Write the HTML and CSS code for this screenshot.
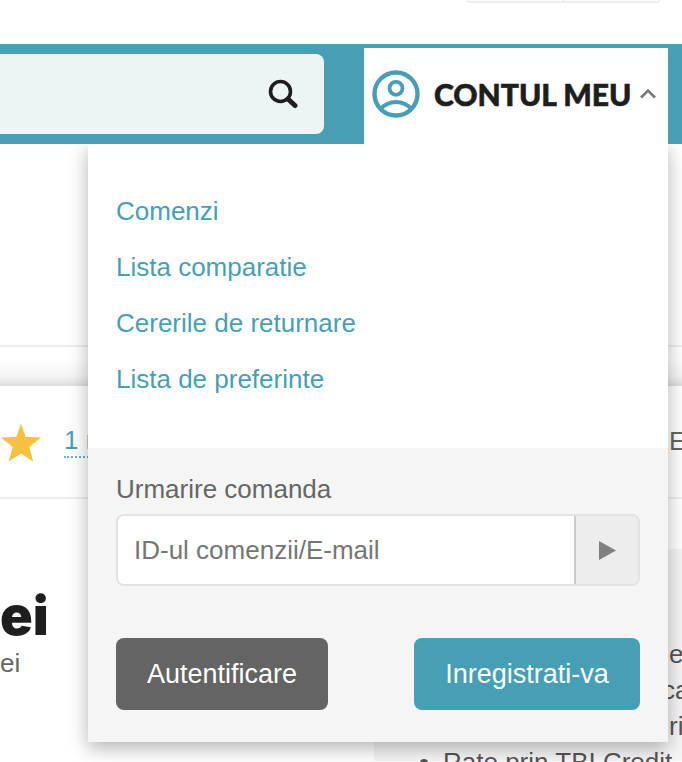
FILE: index.html
```html
<!DOCTYPE html>
<html lang="en">
<head>
    <meta charset="UTF-8">
    <meta name="viewport" content="width=device-width, initial-scale=1.0">
    <title>Contul meu</title>
    <link rel="stylesheet" href="styles.css">
</head>
<body>
    <div class="top-bar">
        <div class="top-tabs">
            <div class="top-tab"></div>
            <div class="top-tab"></div>
        </div>
    </div>

    <div class="header">
        <div class="search-box">
            <svg class="search-icon" viewBox="0 0 30 30" width="30" height="30">
                <circle cx="12.5" cy="12.5" r="10" fill="none" stroke="#1e1e1e" stroke-width="3.6"></circle>
                <path d="M20 20L27 26.5" fill="none" stroke="#1e1e1e" stroke-width="5" stroke-linecap="round"></path>
            </svg>
        </div>
        <div class="account-tab">
            <svg class="account-icon" viewBox="0 0 48 48" width="48" height="48">
                <circle cx="24" cy="24" r="21.5" fill="none" stroke="#479fb5" stroke-width="4.4"></circle>
                <circle cx="24" cy="18.3" r="6.5" fill="none" stroke="#479fb5" stroke-width="3.8"></circle>
                <path d="M8 39.5C13 34 18 32 24 32C30 32 35 34 40 39.5" fill="none" stroke="#479fb5" stroke-width="4"></path>
            </svg>
            <span class="account-label">CONTUL MEU</span>
            <svg class="account-caret" viewBox="0 0 18 12" width="18" height="12">
                <path d="M2 10.5L9 3.5L16 10.5" fill="none" stroke="#777" stroke-width="2.6"></path>
            </svg>
        </div>
    </div>

    <div class="sub-nav"></div>
    <div class="band"></div>

    <div class="rating-row">
        <svg class="star" viewBox="0 0 42 40" width="42" height="40">
            <path d="M21 1.8L25.6 14.8L41 15.6L29.4 25L33.2 39.6L21 31.4L8.8 39.6L12.6 25L1 15.6L16.4 14.8Z" fill="#f6c142"></path>
        </svg>
        <a class="rating-link" href="#">1 review</a>
        <span class="rating-side">E</span>
    </div>

    <div class="content">
        <div class="title-col">
            <h1 class="title">ei</h1>
            <p class="subtitle">ei</p>
        </div>
        <div class="side-panel">
            <div class="side-line">e</div>
            <div class="side-line side-line-wide">ca</div>
            <div class="side-line">ri</div>
            <ul class="side-list">
                <li>Rate prin TBI Credit</li>
            </ul>
        </div>
    </div>

    <div class="dropdown">
        <div class="dropdown-links">
            <a href="#">Comenzi</a>
            <a href="#">Lista comparatie</a>
            <a href="#">Cererile de returnare</a>
            <a href="#">Lista de preferinte</a>
        </div>
        <div class="dropdown-bottom">
            <label class="track-label">Urmarire comanda</label>
            <div class="track-field">
                <div class="track-input">ID-ul comenzii/E-mail</div>
                <div class="track-btn">
                    <svg viewBox="0 0 17 19" width="17" height="19">
                        <path d="M0 0L17 9.5L0 19Z" fill="#808080"></path>
                    </svg>
                </div>
            </div>
            <div class="dropdown-actions">
                <a class="btn btn-dark" href="#">Autentificare</a>
                <a class="btn btn-blue" href="#">Inregistrati-va</a>
            </div>
        </div>
    </div>
</body>
</html>
```

FILE: styles.css
```css
html, body {
    height: 762px;
}

body {
    margin: 0;
    position: relative;
    overflow: hidden;
    background-color: #fff;
    color: #666;
    font-family: "Liberation Sans", Arial, sans-serif;
}

a {
    text-decoration: none;
}

.top-bar {
    height: 44px;
    display: flex;
    justify-content: flex-end;
    padding-right: 22px;
}

.top-tabs {
    display: flex;
    width: 194px;
    height: 3px;
    box-sizing: border-box;
    border: 2px solid #eee;
    border-top: 0;
    border-radius: 0 0 6px 6px;
}

.top-tab {
    flex: 1;
}

.top-tab:first-child {
    border-right: 2px solid #eee;
}

.header {
    height: 100px;
    display: flex;
    background-color: #479fb5;
}

.search-box {
    width: 324px;
    height: 80px;
    margin-top: 10px;
    box-sizing: border-box;
    display: flex;
    align-items: center;
    justify-content: flex-end;
    padding-right: 26px;
    background-color: #ecf4f6;
    border-radius: 0 8px 8px 0;
}

.account-tab {
    width: 304px;
    height: 96px;
    margin-top: 4px;
    margin-left: 40px;
    box-sizing: border-box;
    display: flex;
    align-items: center;
    padding: 0 0 4px 8px;
    background-color: #fff;
}

.account-label {
    margin-left: 14px;
    color: #1e1e1e;
    font-family: Lato, sans-serif;
    font-size: 30px;
    font-weight: 900;
    white-space: nowrap;
    -webkit-text-stroke: 0.6px #1e1e1e;
}

.account-caret {
    margin: -2px 0 0 8px;
}

.sub-nav {
    height: 201px;
    border-bottom: 2px solid #eee;
}

.band {
    height: 39px;
    background: linear-gradient(to bottom, #fff 0, #fff 30%, #f4f4f4 75%, #ddd 100%);
}

.rating-row {
    height: 111px;
    position: relative;
    display: flex;
    align-items: center;
    border-bottom: 2px solid #eee;
}

.rating-link {
    margin-left: 22px;
    color: #479fb5;
    font-size: 26px;
    white-space: nowrap;
    border-bottom: 2px dotted #5bb8cf;
}

.rating-side {
    position: absolute;
    left: 669px;
    font-size: 26px;
}

.content {
    display: flex;
}

.title-col {
    width: 47px;
    padding-top: 91px;
    text-align: right;
}

.title {
    margin: 0;
    color: #1e1e1e;
    font-family: Inter, sans-serif;
    font-size: 54px;
    font-weight: 900;
    line-height: 52px;
}

.subtitle {
    margin: 7px 33px 0 0;
    font-size: 26px;
    line-height: 28px;
}

.side-panel {
    width: 308px;
    height: 212px;
    margin-top: 50px;
    margin-left: 327px;
    box-sizing: border-box;
    padding-top: 87px;
    background-color: #f5f5f5;
    font-size: 26px;
    color: #555;
}

.side-line {
    height: 36px;
    padding-left: 295px;
    line-height: 36px;
    white-space: nowrap;
}

.side-line-wide {
    padding-left: 288px;
}

.side-list {
    margin: 0;
    padding-left: 69px;
    line-height: 36px;
    white-space: nowrap;
}

.dropdown {
    position: absolute;
    top: 144px;
    left: 88px;
    width: 580px;
    height: 598px;
    display: flex;
    flex-direction: column;
    background-color: #fff;
    box-shadow: 0 6px 18px rgba(0, 0, 0, 0.3);
    clip-path: inset(0 -30px -30px -30px);
}

.dropdown-links {
    height: 304px;
    box-sizing: border-box;
    padding: 39px 28px 0;
}

.dropdown-links a {
    display: block;
    height: 56px;
    line-height: 56px;
    color: #479fb5;
    font-size: 26px;
}

.dropdown-bottom {
    flex: 1;
    padding: 26px 28px 0;
    background-color: #f5f5f5;
}

.track-label {
    display: block;
    font-size: 26px;
    line-height: 30px;
}

.track-field {
    display: flex;
    height: 72px;
    margin-top: 10px;
    box-sizing: border-box;
    border: 2px solid #e2e2e2;
    border-radius: 8px;
    overflow: hidden;
}

.track-input {
    flex: 1;
    padding-left: 16px;
    background-color: #fff;
    color: #757575;
    font-size: 26px;
    line-height: 68px;
}

.track-btn {
    width: 62px;
    display: flex;
    align-items: center;
    justify-content: center;
    border-left: 2px solid #ccc;
    background-color: #ededed;
}

.dropdown-actions {
    display: flex;
    justify-content: space-between;
    margin-top: 52px;
}

.btn {
    height: 72px;
    display: flex;
    align-items: center;
    justify-content: center;
    border-radius: 8px;
    color: #fff;
    font-size: 27px;
}

.btn-dark {
    width: 212px;
    background-color: #646464;
}

.btn-blue {
    width: 226px;
    background-color: #479fb5;
}
```
